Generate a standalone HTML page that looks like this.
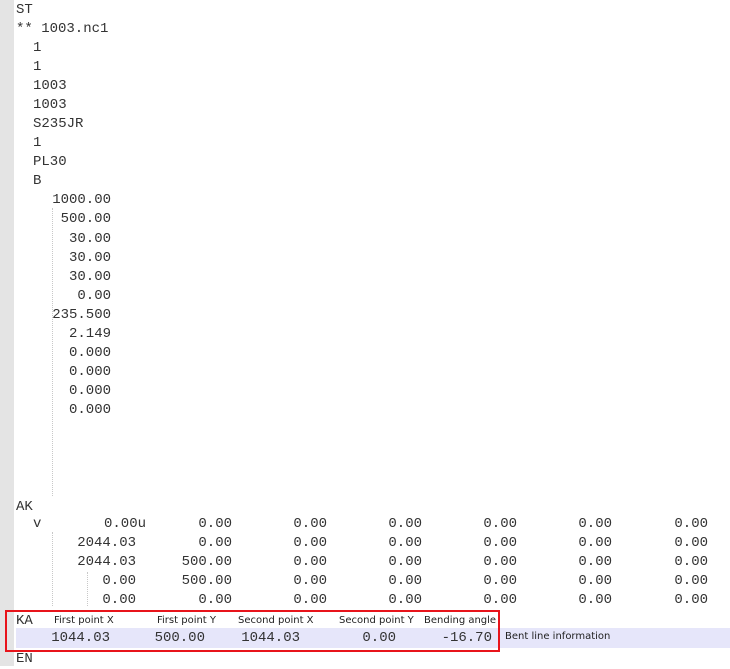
<!DOCTYPE html>
<html><head><meta charset="utf-8"><style>
body{margin:0;width:730px;height:666px;background:#fff;position:relative;overflow:hidden;font-family:"Courier New","Liberation Mono",monospace;font-size:14px;color:#333;}
.bar{position:absolute;left:0;top:0;width:14px;height:666px;background:#e4e4e4;}
.t{position:absolute;line-height:19px;height:19px;white-space:pre;margin-top:1px;}
.r{position:absolute;line-height:19px;height:19px;white-space:pre;text-align:right;margin-top:1px;}
.d{position:absolute;width:0;border-left:1px dotted #c8c8c8;}
.h{position:absolute;font-family:"DejaVu Sans","Liberation Sans",sans-serif;font-size:10px;line-height:14px;color:#222;white-space:pre;}
</style></head><body>
<div class="bar"></div>
<div class="d" style="left:52px;top:208px;height:288px"></div>
<div class="d" style="left:52px;top:532px;height:74px"></div>
<div class="d" style="left:87px;top:572px;height:34px"></div>

<div class="t" style="left:16px;top:0px">ST</div>
<div class="t" style="left:16px;top:19px">** 1003.nc1</div>
<div class="t" style="left:33px;top:38px">1</div>
<div class="t" style="left:33px;top:57px">1</div>
<div class="t" style="left:33px;top:76px">1003</div>
<div class="t" style="left:33px;top:95px">1003</div>
<div class="t" style="left:33px;top:114px">S235JR</div>
<div class="t" style="left:33px;top:133px">1</div>
<div class="t" style="left:33px;top:152px">PL30</div>
<div class="t" style="left:33px;top:171px">B</div>

<div class="r" style="right:619px;top:190px">1000.00</div>
<div class="r" style="right:619px;top:209px">500.00</div>
<div class="r" style="right:619px;top:229px">30.00</div>
<div class="r" style="right:619px;top:248px">30.00</div>
<div class="r" style="right:619px;top:267px">30.00</div>
<div class="r" style="right:619px;top:286px">0.00</div>
<div class="r" style="right:619px;top:305px">235.500</div>
<div class="r" style="right:619px;top:324px">2.149</div>
<div class="r" style="right:619px;top:343px">0.000</div>
<div class="r" style="right:619px;top:362px">0.000</div>
<div class="r" style="right:619px;top:381px">0.000</div>
<div class="r" style="right:619px;top:400px">0.000</div>

<div class="t" style="left:16px;top:497px">AK</div>
<div class="t" style="left:33px;top:514px">v</div>
<div class="r" style="right:584px;top:514px">0.00u</div>
<div class="r" style="right:594px;top:533px">2044.03</div>
<div class="r" style="right:594px;top:552px">2044.03</div>
<div class="r" style="right:594px;top:571px">0.00</div>
<div class="r" style="right:594px;top:590px">0.00</div>

<div style="position:absolute;left:0;top:514px;width:730px">
<div class="r" style="right:498px;top:0">0.00</div><div class="r" style="right:403px;top:0">0.00</div><div class="r" style="right:308px;top:0">0.00</div><div class="r" style="right:213px;top:0">0.00</div><div class="r" style="right:118px;top:0">0.00</div><div class="r" style="right:22px;top:0">0.00</div>
<div class="r" style="right:498px;top:19px">0.00</div><div class="r" style="right:403px;top:19px">0.00</div><div class="r" style="right:308px;top:19px">0.00</div><div class="r" style="right:213px;top:19px">0.00</div><div class="r" style="right:118px;top:19px">0.00</div><div class="r" style="right:22px;top:19px">0.00</div>
<div class="r" style="right:498px;top:38px">500.00</div><div class="r" style="right:403px;top:38px">0.00</div><div class="r" style="right:308px;top:38px">0.00</div><div class="r" style="right:213px;top:38px">0.00</div><div class="r" style="right:118px;top:38px">0.00</div><div class="r" style="right:22px;top:38px">0.00</div>
<div class="r" style="right:498px;top:57px">500.00</div><div class="r" style="right:403px;top:57px">0.00</div><div class="r" style="right:308px;top:57px">0.00</div><div class="r" style="right:213px;top:57px">0.00</div><div class="r" style="right:118px;top:57px">0.00</div><div class="r" style="right:22px;top:57px">0.00</div>
<div class="r" style="right:498px;top:76px">0.00</div><div class="r" style="right:403px;top:76px">0.00</div><div class="r" style="right:308px;top:76px">0.00</div><div class="r" style="right:213px;top:76px">0.00</div><div class="r" style="right:118px;top:76px">0.00</div><div class="r" style="right:22px;top:76px">0.00</div>
</div>

<div style="position:absolute;left:16px;top:628px;width:714px;height:20px;background:#e6e6fa"></div>
<div style="position:absolute;left:5px;top:610px;width:491px;height:38px;border:2px solid #e8141b"></div>
<div class="t" style="left:16px;top:611px">KA</div>
<div class="h" style="left:54px;top:614px">First point X</div>
<div class="h" style="left:157px;top:614px">First point Y</div>
<div class="h" style="left:238px;top:614px">Second point X</div>
<div class="h" style="left:339px;top:614px">Second point Y</div>
<div class="h" style="left:424px;top:614px">Bending angle</div>
<div class="r" style="right:620px;top:628px">1044.03</div>
<div class="r" style="right:525px;top:628px">500.00</div>
<div class="r" style="right:430px;top:628px">1044.03</div>
<div class="r" style="right:334px;top:628px">0.00</div>
<div class="r" style="right:238px;top:628px">-16.70</div>
<div class="h" style="left:505px;top:630px">Bent line information</div>
<div class="t" style="left:16px;top:649px">EN</div>
</body></html>
